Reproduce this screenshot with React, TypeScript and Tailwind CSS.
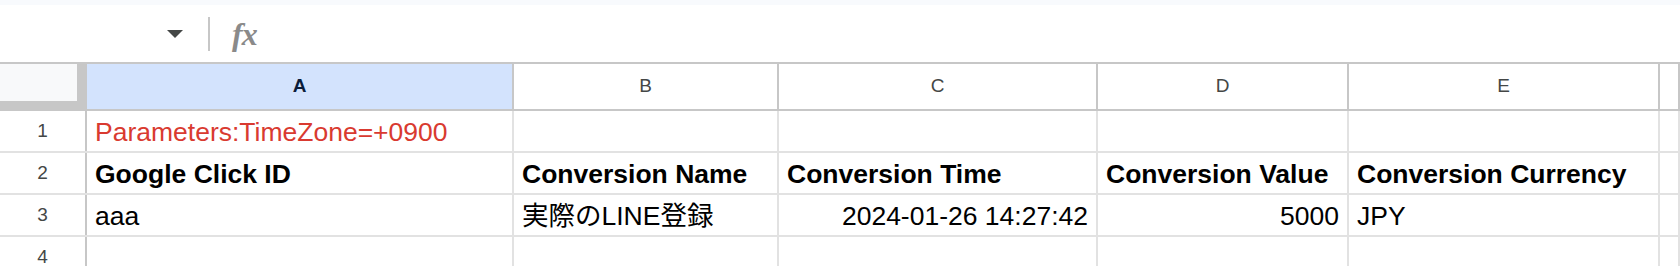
const cols = ["A", "B", "C", "D", "E", ""];

type Cell = { text?: string; bold?: boolean; red?: boolean; right?: boolean };

const rows: Cell[][] = [
  [{ text: "Parameters:TimeZone=+0900", red: true }, {}, {}, {}, {}, {}],
  [
    { text: "Google Click ID", bold: true },
    { text: "Conversion Name", bold: true },
    { text: "Conversion Time", bold: true },
    { text: "Conversion Value", bold: true },
    { text: "Conversion Currency", bold: true },
    {},
  ],
  [
    { text: "aaa" },
    { text: "実際のLINE登録" },
    { text: "2024-01-26 14:27:42", right: true },
    { text: "5000", right: true },
    { text: "JPY" },
    {},
  ],
  [{}, {}, {}, {}, {}, {}],
];

export default function App() {
  return (
    <div className="w-[1680px] h-[266px] overflow-hidden bg-white font-['Liberation_Sans','Noto_Sans_CJK_JP',sans-serif]">
      <div className="h-[5px] bg-[#f8fafd]" />

      {/* formula bar */}
      <div className="h-[59px] flex items-center border-b-2 border-[#c7c7c7]">
        <div className="w-[208px] flex justify-end pr-[25px]">
          <svg width="16" height="8" viewBox="0 0 16 8">
            <path d="M0 0 L16 0 L8 8 Z" fill="#444746" />
          </svg>
        </div>
        <div className="w-[2px] h-[34px] bg-[#c7c7c7]" />
        <span className="ml-[22px] font-['Liberation_Serif',serif] italic text-[32px] leading-none text-[#8a8a8a] font-bold tracking-[-1px]">
          fx
        </span>
      </div>

      {/* column headers */}
      <div className="grid grid-cols-[87px_427px_265px_319px_251px_311px_20px] h-[47px] border-b-2 border-[#c7c7c7]">
        <div className="bg-[#c7c7c7] pr-[10px] pb-[8px]">
          <div className="h-full bg-[#f8f9fa]" />
        </div>
        {cols.map((c, i) => (
          <div
            key={i}
            className={
              i === 0
                ? "flex items-center justify-center bg-[#d3e3fd] border-r-2 border-[#c7c7c7] text-[19px] font-bold text-[#0b1d3a]"
                : "flex items-center justify-center border-r-2 border-[#c7c7c7] text-[19px] text-[#444746]"
            }
          >
            {c}
          </div>
        ))}
      </div>

      {/* rows */}
      {rows.map((row, r) => (
        <div
          key={r}
          className="grid grid-cols-[87px_427px_265px_319px_251px_311px_20px] h-[42px] border-b-2 border-[#e2e2e2]"
        >
          <div className="flex items-center justify-center border-r-2 border-[#c7c7c7] text-[19px] text-[#444746]">
            {r + 1}
          </div>
          {row.map((cell, i) => (
            <div
              key={i}
              className={
                "flex items-end pb-[6px] px-[8px] border-r-2 border-[#e2e2e2] text-[26.5px] leading-[26px] whitespace-nowrap overflow-hidden " +
                (cell.right ? "justify-end " : "justify-start ") +
                (cell.bold ? "font-bold " : "") +
                (cell.red ? "text-[#d93a30]" : "text-black")
              }
            >
              {cell.text}
            </div>
          ))}
        </div>
      ))}
    </div>
  );
}
